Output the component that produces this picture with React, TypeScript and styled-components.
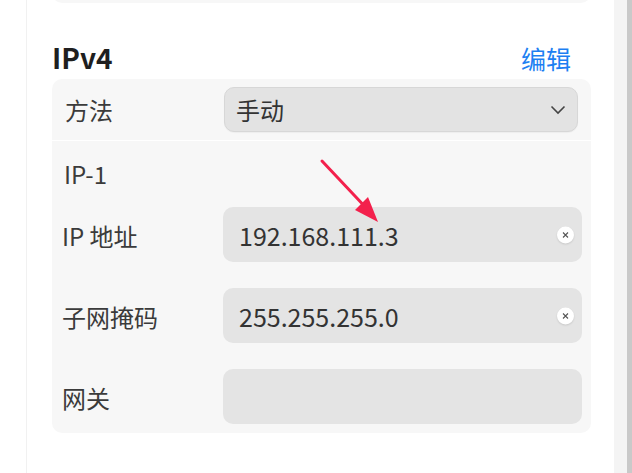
import React from "react";
import styled, { createGlobalStyle } from "styled-components";

const Global = createGlobalStyle`
  html, body { margin: 0; padding: 0; background: #ffffff; }
  body { font-family: "Noto Sans CJK SC", "Noto Sans", sans-serif; overflow: hidden; }
`;

const Page = styled.div`
  display: flex;
  width: 632px;
  height: 473px;
  overflow: hidden;
`;

const Gutter = styled.div`
  width: 26px;
  flex: none;
  border-right: 1px solid #f1f1f1;
  background: #ffffff;
`;

const Content = styled.div`
  flex: 1;
  padding: 0 23px 0 25px;
  display: flex;
  flex-direction: column;
`;

const ScrollTrack = styled.div`
  width: 13px;
  flex: none;
  background: #f4f4f4;
`;

const ScrollEdge = styled.div`
  width: 5px;
  flex: none;
  background: #c9c9c9;
`;

const TopCard = styled.div`
  height: 43px;
  margin-top: -40px;
  background: #f7f7f7;
  border-radius: 10px;
`;

const Header = styled.div`
  display: flex;
  justify-content: space-between;
  align-items: center;
  margin-top: 35px;
  height: 40px;
  padding-right: 20px;
`;

const Title = styled.h2`
  margin: 0;
  font-size: 28px;
  font-weight: 700;
  color: #1f1f1f;
  line-height: 40px;
  position: relative;
  top: -1px;
`;

const EditLink = styled.span`
  font-size: 25px;
  color: #1d7ff2;
  line-height: 40px;
`;

const Section = styled.div`
  position: relative;
  margin-top: 1px;
  background: #f7f7f7;
  border-radius: 10px;
  padding-bottom: 9px;
`;

const MethodRow = styled.div`
  display: grid;
  grid-template-columns: 159px 1fr;
  align-items: center;
  height: 61px;
  padding: 0 13px;
  border-bottom: 1px solid #ffffff;
`;

const Label = styled.div<{ $offset?: number }>`
  font-size: 24px;
  color: #3b3b3b;
  line-height: 30px;
  margin-top: ${(p) => p.$offset ?? 0}px;
`;

const Select = styled.div`
  display: flex;
  align-items: center;
  justify-content: space-between;
  height: 43px;
  padding: 0 11px 0 11px;
  background: #e3e3e3;
  border: 1px solid #d7d7d7;
  border-radius: 10px;
  box-shadow: 0 1px 1px rgba(0, 0, 0, 0.04);
  font-size: 24px;
  color: #333333;
`;

const GroupTitle = styled.div`
  padding: 18px 12px 0 12px;
  font-size: 24px;
  line-height: 30px;
  color: #3b3b3b;
`;

const Fields = styled.div`
  display: flex;
  flex-direction: column;
  gap: 26px;
  margin-top: 18px;
`;

const FieldRow = styled.div`
  display: grid;
  grid-template-columns: 161px 1fr;
  align-items: center;
  padding: 0 9px 0 10px;
`;

const Input = styled.div`
  position: relative;
  height: 55px;
  display: flex;
  align-items: center;
  padding: 0 16px;
  background: #e4e4e4;
  border-radius: 10px;
  font-size: 25px;
  color: #333333;
`;

const ClearButton = styled.span`
  position: absolute;
  right: 8px;
  top: 50%;
  transform: translateY(-50%);
  width: 17px;
  height: 17px;
  border-radius: 50%;
  background: #ffffff;
  box-shadow: 0 1px 2px rgba(0, 0, 0, 0.12);
  display: flex;
  align-items: center;
  justify-content: center;
`;

const ArrowOverlay = styled.svg`
  position: absolute;
  left: 0;
  top: 0;
  pointer-events: none;
`;

const Chevron = () => (
  <svg width="16" height="10" viewBox="0 0 16 10">
    <path d="M1.5 1.5 L8 8 L14.5 1.5" fill="none" stroke="#444" strokeWidth="1.6" />
  </svg>
);

const ClearIcon = () => (
  <svg width="7" height="7" viewBox="0 0 7 7">
    <path d="M1 1 L6 6 M6 1 L1 6" stroke="#555" strokeWidth="1.1" />
  </svg>
);

const fields = [
  { label: "IP 地址", value: "192.168.111.3", clear: true },
  { label: "子网掩码", value: "255.255.255.0", clear: true },
  { label: "网关", value: "", clear: false },
];

export default function App() {
  return (
    <>
      <Global />
      <Page>
        <Gutter />
        <Content>
          <TopCard />
          <Header>
            <Title>IPv4</Title>
            <EditLink>编辑</EditLink>
          </Header>
          <Section>
            <MethodRow>
              <Label>方法</Label>
              <Select>
                <span>手动</span>
                <Chevron />
              </Select>
            </MethodRow>
            <GroupTitle>IP-1</GroupTitle>
            <Fields>
              {fields.map((f) => (
                <FieldRow key={f.label}>
                  <Label $offset={3}>{f.label}</Label>
                  <Input>
                    {f.value}
                    {f.clear && (
                      <ClearButton>
                        <ClearIcon />
                      </ClearButton>
                    )}
                  </Input>
                </FieldRow>
              ))}
            </Fields>
            <ArrowOverlay width="540" height="360" viewBox="0 0 540 360">
              <line x1="270" y1="82" x2="318" y2="133" stroke="#f3204c" strokeWidth="3" strokeLinecap="round" />
              <polygon points="326,143 303,131 316,118" fill="#f3204c" />
            </ArrowOverlay>
          </Section>
        </Content>
        <ScrollTrack />
        <ScrollEdge />
      </Page>
    </>
  );
}
